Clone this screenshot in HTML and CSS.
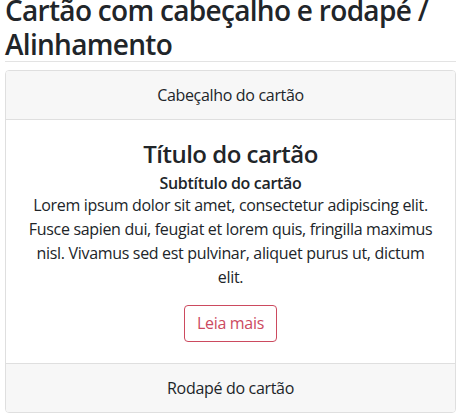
FILE: index.html
```html
<!DOCTYPE html>
<html lang="pt">
<head>
<meta charset="utf-8">
<link rel="stylesheet" href="styles.css">
</head>
<body>
<div class="page">
  <h1 class="page-title">Cartão com cabeçalho e rodapé / Alinhamento</h1>
  <div class="card">
    <div class="card-header">Cabeçalho do cartão</div>
    <div class="card-body">
      <h4 class="card-title">Título do cartão</h4>
      <h6 class="card-subtitle">Subtítulo do cartão</h6>
      <p class="card-text">Lorem ipsum dolor sit amet, consectetur adipiscing elit. Fusce sapien dui, feugiat et lorem quis, fringilla maximus nisl. Vivamus sed est pulvinar, aliquet purus ut, dictum elit.</p>
      <a class="btn-outline" href="#">Leia mais</a>
    </div>
    <div class="card-footer">Rodapé do cartão</div>
  </div>
</div>
</body>
</html>
```
FILE: styles.css
```css
* { box-sizing: border-box; }
html, body { margin: 0; background: #fff; }
body {
  font-family: "Open Sans", "Noto Sans", sans-serif;
  font-size: 16px;
  line-height: 24px;
  color: #212529;
  letter-spacing: -0.32px;
}
.page {
  padding: 0 9px 0 5px;
}
.page-title {
  margin: -6px 0 8px;
  font-size: 28px;
  line-height: 33.6px;
  font-weight: 600;
  letter-spacing: -0.7px;
  border-bottom: 1px solid #e3e3e3;
}
.card {
  border: 1px solid #dfdfdf;
  border-radius: 4px;
  background: #fff;
  text-align: center;
}
.card-header {
  padding: 12px 20px;
  background: #f7f7f7;
  border-bottom: 1px solid #dfdfdf;
  border-radius: 3px 3px 0 0;
}
.card-body {
  padding: 20px 20px 21px;
}
.card-title {
  margin: 0 0 5px;
  font-size: 24px;
  line-height: 28.8px;
  font-weight: 600;
  letter-spacing: -0.5px;
}
.card-subtitle {
  margin: 0;
  font-size: 16px;
  line-height: 19.2px;
  font-weight: 600;
}
.card-text {
  margin: 0 0 16px;
}
.btn-outline {
  display: inline-block;
  padding: 6px 12px;
  line-height: 23px;
  border: 1px solid #cc4a5f;
  border-radius: 4px;
  color: #cc4a5f;
  text-decoration: none;
}
.card-footer {
  padding: 12px 20px;
  background: #f7f7f7;
  border-top: 1px solid #dfdfdf;
  border-radius: 0 0 3px 3px;
}
```
